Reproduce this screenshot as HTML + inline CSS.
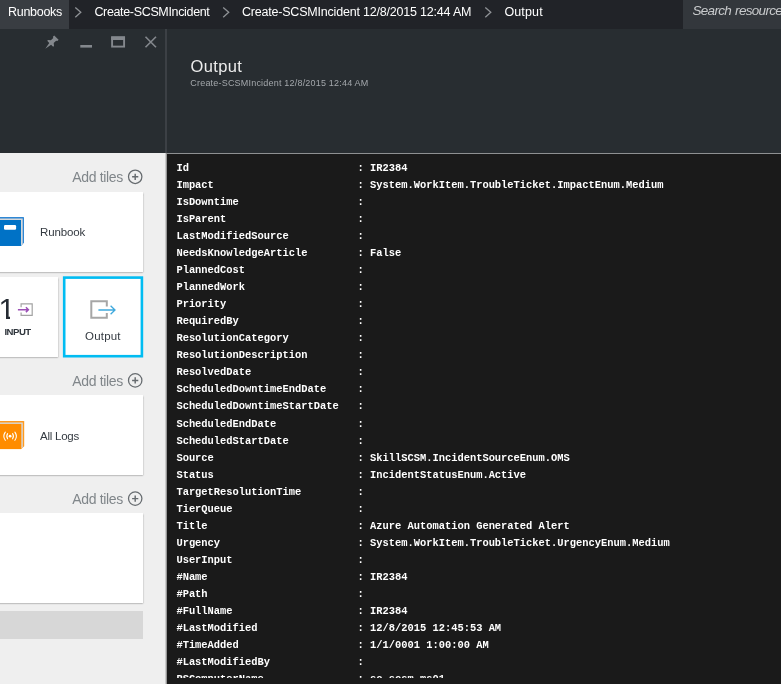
<!DOCTYPE html>
<html><head><meta charset="utf-8"><title>Output</title>
<style>
html,body{margin:0;padding:0;}
body{width:781px;height:684px;overflow:hidden;position:relative;background:#282d31;font-family:"Liberation Sans",sans-serif;}
.abs{position:absolute;}
#topbar{left:0;top:0;width:781px;height:29.2px;background:#212328;}
#tab{left:0;top:0;width:69px;height:29.2px;background:#393d42;}
.bc{top:0;height:24px;line-height:24px;font-size:12.5px;color:#fff;white-space:nowrap;}
.sep{top:0;height:24px;}
#search{left:683.1px;top:0;width:98px;height:29.2px;background:#33373c;}
#searchtxt{left:692.5px;top:0;line-height:22.3px;font-size:13.5px;letter-spacing:-0.7px;word-spacing:1px;font-style:italic;color:#c9cbcd;white-space:nowrap;}
#hdr{left:0;top:29.2px;width:781px;height:123.6px;background:#282d31;}
#divider{left:165.1px;top:29px;width:2.3px;height:123.6px;background:#3c4045;}
#title{left:190.6px;top:54.8px;font-size:16.5px;letter-spacing:0.35px;line-height:22px;color:#ececec;white-space:nowrap;}
#sub{left:190.3px;top:77px;font-size:9px;letter-spacing:0.2px;line-height:12px;color:#a3a7ab;white-space:nowrap;}
#left{left:0;top:152.6px;width:166px;height:532px;background:#efefef;}
#right{left:167.2px;top:154px;width:614px;height:530px;background:#1a1a1a;}
#rline{left:167.2px;top:152.7px;width:614px;height:1.4px;background:#8e9092;}
#clip{left:167px;top:153px;width:614px;height:524.7px;overflow:hidden;}
pre{margin:0;left:9.4px;top:6.5px;font-family:"Liberation Mono",monospace;font-weight:bold;font-size:10.42px;line-height:17.03px;color:#fff;white-space:pre;}
.tile{background:#fff;box-shadow:0 1.3px 1.6px rgba(0,0,0,.42);}
.add{font-size:14px;letter-spacing:-0.33px;color:#80868a;white-space:nowrap;line-height:18px;}
.lbl{font-size:11.5px;color:#343a41;white-space:nowrap;line-height:16px;}
</style></head><body>
<div id="root" class="abs" style="left:0;top:0;width:781px;height:684px;overflow:hidden;will-change:transform;">
<div id="topbar" class="abs"></div>
<div id="tab" class="abs"></div>
<div class="abs bc" id="b1" style="left:8px;letter-spacing:-0.29px;">Runbooks</div>
<div class="abs bc" id="b2" style="left:94.4px;letter-spacing:-0.34px;">Create-SCSMIncident</div>
<div class="abs bc" id="b3" style="left:241.9px;letter-spacing:-0.2px;">Create-SCSMIncident 12/8/2015 12:44 AM</div>
<div class="abs bc" id="b4" style="left:504.4px;letter-spacing:0.14px;">Output</div>
<svg class="abs" style="left:0;top:0" width="781" height="29" viewBox="0 0 781 29">
 <g fill="none" stroke="#8f9296" stroke-width="1.3">
  <path d="M75.3 7.4 L80.8 12.3 L75.3 17.2"/>
  <path d="M223.2 7.4 L228.7 12.3 L223.2 17.2"/>
  <path d="M485.3 7.4 L490.8 12.3 L485.3 17.2"/>
 </g>
</svg>
<div id="search" class="abs"></div>
<div id="searchtxt" class="abs">Search resources</div>
<div id="hdr" class="abs"></div>
<div id="divider" class="abs"></div>
<svg class="abs" style="left:40px;top:32px" width="125" height="22" viewBox="40 32 125 22">
 <g fill="#84888d" stroke="none">
  <g transform="translate(50.6 43.4) rotate(45)"><path d="M-3.1 -8.2 H3.1 V-6.4 L2 -5.8 L2 -2.4 L4.2 -0.6 V0.6 H1.3 L0 7.5 L-1.3 0.6 H-4.2 V-0.6 L-2 -2.4 L-2 -5.8 L-3.1 -6.4 Z"/></g>
  <rect x="80.3" y="45" width="11.7" height="2.6"/>
 </g>
 <g fill="none" stroke="#84888d">
  <rect x="112.1" y="37.4" width="12" height="9.2" stroke-width="1.9"/>
  <rect x="111.2" y="36.4" width="13.8" height="3.6" fill="#84888d" stroke="none"/>
  <path d="M145.5 36.8 L156 47.3 M156 36.8 L145.5 47.3" stroke-width="1.6"/>
 </g>
</svg>
<div id="title" class="abs">Output</div>
<div id="sub" class="abs">Create-SCSMIncident 12/8/2015 12:44 AM</div>

<div id="left" class="abs"></div>
<div class="abs" style="left:164.8px;top:152.6px;width:2.4px;height:532px;background:linear-gradient(90deg,#e6e6e6,#7a7a7a);"></div>
<div id="rline" class="abs"></div>
<div id="right" class="abs"></div>
<div id="clip" class="abs"><pre class="abs">Id                           : IR2384
Impact                       : System.WorkItem.TroubleTicket.ImpactEnum.Medium
IsDowntime                   :
IsParent                     :
LastModifiedSource           :
NeedsKnowledgeArticle        : False
PlannedCost                  :
PlannedWork                  :
Priority                     :
RequiredBy                   :
ResolutionCategory           :
ResolutionDescription        :
ResolvedDate                 :
ScheduledDowntimeEndDate     :
ScheduledDowntimeStartDate   :</pre><pre class="abs" style="top:262.95px;">ScheduledEndDate             :
ScheduledStartDate           :
Source                       : SkillSCSM.IncidentSourceEnum.OMS
Status                       : IncidentStatusEnum.Active
TargetResolutionTime         :
TierQueue                    :
Title                        : Azure Automation Generated Alert
Urgency                      : System.WorkItem.TroubleTicket.UrgencyEnum.Medium
UserInput                    :
#Name                        : IR2384
#Path                        :
#FullName                    : IR2384
#LastModified                : 12/8/2015 12:45:53 AM
#TimeAdded                   : 1/1/0001 1:00:00 AM
#LastModifiedBy              :
PSComputerName               : sc-scsm-ms01</pre></div>

<!-- Add tiles -->
<div class="abs add" id="a1" style="left:72.2px;top:168.1px;">Add tiles</div>
<div class="abs add" id="a2" style="left:72.2px;top:371.7px;">Add tiles</div>
<div class="abs add" id="a3" style="left:72.2px;top:489.9px;">Add tiles</div>
<svg class="abs" style="left:126px;top:168px" width="18" height="340" viewBox="126 168 18 340">
 <g fill="none" stroke="#666b6f" stroke-width="1.25">
  <circle cx="135.2" cy="176.8" r="6.7"/><path d="M135.2 173.7 V179.9 M132.1 176.8 H138.3" stroke-width="1.45"/>
  <circle cx="135.2" cy="380.4" r="6.7"/><path d="M135.2 377.3 V383.5 M132.1 380.4 H138.3" stroke-width="1.45"/>
  <circle cx="135.2" cy="498.6" r="6.7"/><path d="M135.2 495.5 V501.7 M132.1 498.6 H138.3" stroke-width="1.45"/>
 </g>
</svg>

<!-- tiles -->
<div class="abs tile" style="left:-5px;top:192px;width:148px;height:79.6px;"></div>
<div class="abs tile" style="left:-5px;top:277px;width:62.5px;height:80px;"></div>
<svg class="abs" style="left:60px;top:274px" width="86" height="86" viewBox="60 274 86 86"><rect x="64.2" y="277.6" width="77.7" height="78.6" fill="#fff" stroke="#00bcf2" stroke-width="2.6"/></svg>
<div class="abs tile" style="left:-5px;top:395px;width:148px;height:79.5px;"></div>
<div class="abs tile" style="left:-5px;top:513.4px;width:148px;height:89.4px;"></div>
<div class="abs" style="left:0;top:610.7px;width:143px;height:28.1px;background:#d7d7d7;"></div>

<!-- runbook icon -->
<svg class="abs" style="left:0;top:214px" width="28" height="36" viewBox="0 214 28 36">
 <path d="M0 217 H23.4 Q24 217 24 217.6 V242.8 L21 245.9 H0 Z" fill="#2f87d4"/>
 <path d="M0 218.6 H22.7 V243.9 L21 245.6 V220 H0 Z" fill="#d6d8da"/>
 <rect x="-2" y="220" width="23" height="25.9" fill="#0072c6"/>
 <rect x="4" y="225" width="12.1" height="4.8" rx="1.2" fill="#fff"/>
</svg>
<div class="abs lbl" id="l1" style="left:40px;top:224.3px;letter-spacing:-0.14px;">Runbook</div>

<!-- input tile -->
<div class="abs" id="one" style="left:-1.4px;top:292.1px;font-size:29.8px;line-height:34px;color:#252b33;">1</div>
<div class="abs" style="left:0;top:316px;width:5.6px;height:5px;background:#fff;"></div>
<div class="abs" style="left:9.6px;top:316px;width:5px;height:5px;background:#fff;"></div>
<svg class="abs" style="left:14px;top:298px" width="24" height="24" viewBox="14 298 24 24">
 <path d="M21.1 307.3 V303.9 H32.2 V315.3 H21.1 V312.4" fill="none" stroke="#a3a3a3" stroke-width="1.2"/>
 <path d="M17.9 309.7 H28.2 M25.9 307.3 L28.4 309.7 L25.9 312.1" fill="none" stroke="#9b4fb5" stroke-width="1.5"/>
</svg>
<div class="abs" id="inp" style="left:4.4px;top:324.8px;font-size:9.6px;font-weight:bold;line-height:13px;color:#30363d;letter-spacing:-0.5px;">INPUT</div>

<!-- output tile -->
<svg class="abs" style="left:86px;top:296px" width="34" height="28" viewBox="86 296 34 28">
 <path d="M106.8 306.5 V301.3 H91.3 V317.8 H106.8 V313" fill="none" stroke="#a6a6a6" stroke-width="2"/>
 <path d="M98.4 310 H114.8 M110.6 305.8 L115 310 L110.6 314.2" fill="none" stroke="#3fa9dd" stroke-width="1.3"/>
</svg>
<div class="abs lbl" id="l2" style="left:85px;top:328.2px;letter-spacing:0.2px;">Output</div>

<!-- all logs icon -->
<svg class="abs" style="left:0;top:417px" width="28" height="36" viewBox="0 417 28 36">
 <path d="M0 420.9 H23.6 Q24.2 420.9 24.2 421.5 V446.2 L21.2 449.1 H0 Z" fill="#ff9a1f"/>
 <path d="M0 422.5 H22.8 V447.2 L21.2 448.8 V424 H0 Z" fill="#d6d8da"/>
 <rect x="-2" y="423.9" width="23.2" height="25.2" fill="#ff8c00"/>
 <g fill="none" stroke="#fff" stroke-width="1.1" stroke-linecap="round">
  <path d="M7.6 433.6 Q5.9 436.2 7.6 438.8"/><path d="M12.6 433.6 Q14.3 436.2 12.6 438.8"/>
  <path d="M5.3 432.1 Q2.3 436.2 5.3 440.3"/><path d="M14.9 432.1 Q17.9 436.2 14.9 440.3"/>
 </g>
 <circle cx="10.1" cy="436.2" r="1.4" fill="#fff"/>
</svg>
<div class="abs lbl" id="l3" style="left:40px;top:428.3px;letter-spacing:-0.24px;">All Logs</div>
</div>
</body></html>
